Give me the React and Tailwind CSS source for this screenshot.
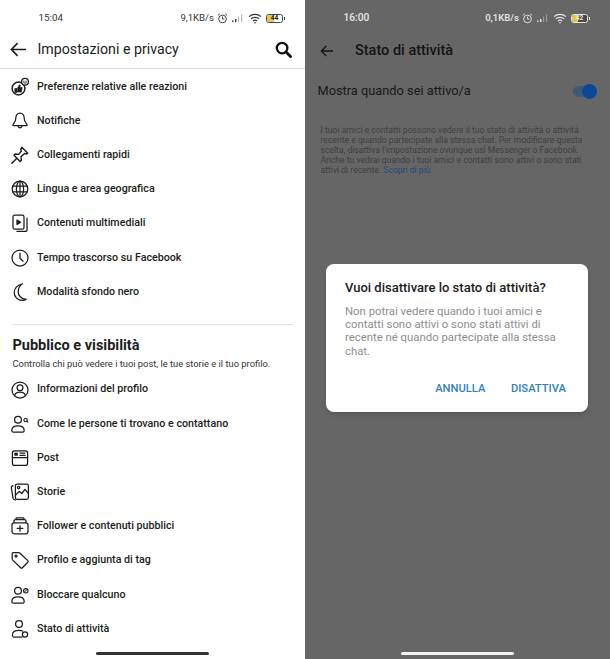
const S = ({ children, className = "" }) => (
  <svg viewBox="0 0 20 20" fill="none" stroke="#1c1c1c" strokeWidth="1.25" strokeLinecap="round" strokeLinejoin="round" className={"w-[20px] h-[20px] shrink-0 " + className}>{children}</svg>
);

const icons = {
  react: <S><circle cx="8.5" cy="11.5" r="6.4" strokeWidth="1.5" /><path d="M5 11.5h2v4H5zM7.5 11l2-3.2.8.5-.3 2.2h2.2l-.7 4.6H7.5z" fill="#1c1c1c" strokeWidth="0.6" /><circle cx="15" cy="4.8" r="3.4" fill="#fff" /><path d="M13.6 4.2h.6M15.8 4.2h.6M13.6 5.8q1.4 1 2.8 0" strokeWidth="0.9" /></S>,
  bell: <S><path d="M10 2c-2.6 0-4.2 2.4-4.2 5.2 0 3.4-2 5.2-3 6.8 0 .5.3.7.7.7h13c.4 0 .7-.2.7-.7-1-1.6-3-3.4-3-6.8C14.200 4.400 12.600 2 10 2z" /><path d="M8 14.800c.2 2.600 3.800 2.600 4 0" /></S>,
  pin: <S><path d="M11.800 2.200l6 6-1.600.8-1.600-.6-3.600 3.400.4 3.400-1.200 1.200-6.200-6.200 1.200-1.200 3.400.4L11.400 6l-.6-1.800z" strokeWidth="1.4" /><path d="M6.600 13.400L1.800 18.200" strokeWidth="1.4" /></S>,
  globe: <S><circle cx="10" cy="10" r="7.800" /><ellipse cx="10" cy="10" rx="3.600" ry="7.800" /><path d="M2.600 7.200h14.800M2.600 12.800h14.800M10 2.200v15.600" /></S>,
  media: <S><rect x="3" y="2.200" width="11" height="14" rx="1.800" /><path d="M17 5.200v11.200a2 2 0 0 1-2 2H7" /><path d="M7 7l3.600 2.200L7 11.400z" fill="#1c1c1c" /></S>,
  clock: <S><circle cx="10" cy="10" r="8" /><path d="M10 5v5.200l3 3" /></S>,
  moon: <S><path d="M12.600 1.800C7.600 2.600 4.200 6.200 4.200 10.600c0 4.200 3.600 7.800 8 7.800 1.600 0 3-.4 4-1-5.400-.4-8-4-8-7.600 0-3.400 1.600-6.400 4.400-8z" /></S>,
  profile: <S><circle cx="10" cy="10" r="8" /><circle cx="10" cy="7.800" r="2.900" /><path d="M4.600 15.600c.6-3 2.800-3.600 5.400-3.600s4.800.6 5.400 3.600" /></S>,
  find: <S><circle cx="8" cy="5.800" r="3.400" /><path d="M1.800 16.400c0-3.200 2.600-4.600 6.200-4.600s6.200 1.400 6.200 4.600c0 1-.6 1.600-1.600 1.600H3.400c-1 0-1.600-.6-1.600-1.600z" /><circle cx="15.600" cy="6" r="1.700" strokeWidth="1.100" /><path d="M16.800 7.200l1 1" strokeWidth="1.100" /></S>,
  post: <S><rect x="2.400" y="2.800" width="15.200" height="14.600" rx="2.200" /><path d="M2.400 9.600h15.200" /><path d="M5 5h2.400v2.400H5z" fill="#1c1c1c" strokeWidth="0.7" /><path d="M10 5h5M10 7.400h5" /></S>,
  story: <S><rect x="5.400" y="2" width="13" height="15.400" rx="1.800" /><path d="M3 3.600C1.600 4 1.200 5 1.400 6.200l1.600 10c.2 1 1 1.600 2.400 1.800" /><circle cx="8.600" cy="5.600" r="1.200" /><path d="M5.600 13l3.600-3.600 2.600 2.200 3-4.200 3.400 3.600" /></S>,
  follower: <S><rect x="2" y="6.800" width="16" height="11" rx="2.200" /><path d="M4 6.600V5c0-.9.7-1.400 1.400-1.400h9.200c.7 0 1.400.5 1.400 1.400v1.600M6 3.400V2.600c0-.5.4-.8.8-.8h6.400c.4 0 .8.3.8.8v.8" /><path d="M10 9.600v5.600M7.200 12.400h5.600" /></S>,
  tag: <S><path d="M3.200 2.600h5.400c.6 0 1 .2 1.400.6l7.800 7.400c.5.5.5 1.200 0 1.700l-5.400 5.500c-.5.5-1.200.5-1.700 0L3 10.400c-.5-.5-.8-1-.8-1.700V3.600c0-.6.4-1 1-1z" /><circle cx="6" cy="6" r="1" /></S>,
  block: <S><circle cx="8" cy="5.800" r="3.400" /><path d="M1.800 16.400c0-3.200 2.600-4.600 6.200-4.600s6.200 1.400 6.200 4.600c0 1-.6 1.600-1.600 1.600H3.400c-1 0-1.600-.6-1.600-1.600z" /><circle cx="15.800" cy="5.800" r="2.200" strokeWidth="1.100" /><path d="M14.400 7.200l2.800-2.800" strokeWidth="1" /></S>,
  status: <S><circle cx="9" cy="5" r="3.400" /><path d="M2.400 16.200c0-3.200 2.600-4.800 6.600-4.800 1.400 0 2.600.2 3.600.6M2.400 16.200c0 1 .6 1.800 1.600 1.800h8" /><circle cx="15" cy="15.400" r="2.600" /></S>,
};

const Row = ({ icon, label }) => (
  <div className="h-[34.2px] flex items-center pl-[10px]">
    <div className="w-[27px]">{icons[icon]}</div>
    <span className="text-[10.7px] font-medium text-[#1c1e21] whitespace-nowrap">{label}</span>
  </div>
);

const StatusIcons = ({ speed, level, dim }) => {
  const c = dim ? "#e6e6e6" : "#333";
  return (
    <div className={"flex items-center text-[9.6px] leading-[14px] " + (dim ? "text-[#e6e6e6] font-medium" : "text-[#333]")}>
      <span>{speed}</span>
      <svg viewBox="0 0 12 12" className="w-[11px] h-[11px] ml-[3px]" fill="none" stroke={c} strokeWidth="1"><circle cx="6" cy="6.500" r="4.200" /><path d="M6 4v2.600h2M1 2.600L3 1M11 2.600L9 1" /></svg>
      <svg viewBox="0 0 14 10" className="w-[14px] h-[10px] ml-[3px]"><path d="M1 7.600h1.400V9H1zM4 6h1.400v3H4z" fill={c} /><path d="M7 3.500h1.200V9H7zM10 1.200h1.200V9H10z" fill={dim ? "#999" : "#bbb"} /></svg>
      <svg viewBox="0 0 14 11" className="w-[14px] h-[11px] ml-[3px]" fill="none" stroke={c} strokeWidth="1.200"><path d="M1 3.600c3.400-3 8.600-3 12 0M3 5.800c2.200-2 5.800-2 8 0M5 8c1.100-1 2.900-1 4 0" /><circle cx="7" cy="9.700" r=".8" fill={c} stroke="none" /></svg>
      <div className={"ml-[4px] w-[17px] h-[9px] rounded-[2.5px] border flex overflow-hidden relative " + (dim ? "border-[#e6e6e6] bg-[#4a4a4a]" : "border-[#444] bg-white")}>
        <div className={"h-full bg-[#e9c74e] " + (level === "44" ? "w-[45%]" : "w-[40%]")} />
        <span className={"absolute inset-0 text-[6.5px] leading-[7px] text-center font-bold " + (dim ? "text-[#e6e6e6]" : "text-[#222]")}>{level}</span>
      </div>
      <div className={"w-[1px] h-[3px] ml-[1px] " + (dim ? "bg-[#e6e6e6]" : "bg-[#444]")} />
    </div>
  );
};

const Bar = ({ className }) => <div className={"absolute bottom-[4px] h-[3px] w-[113px] rounded-full " + className} />;

export default function App() {
  return (
    <div className="w-[610px] h-[659px] flex overflow-hidden" style={{ fontFamily: "Roboto, sans-serif" }}>
      <div className="w-[305px] h-full bg-white relative flex flex-col">
        <div className="h-[31px] pt-[11px] pl-[38.5px] pr-[20px] flex justify-between items-start">
          <span className="text-[9.8px] leading-[14px] text-[#333]">15:04</span>
          <StatusIcons speed="9,1KB/s" level="44" />
        </div>
        <div className="h-[38px] border-b border-[#d9d9d9] flex items-center pl-[10px] pr-[13px]">
          <svg viewBox="0 0 18 16" className="w-[17px] h-[15px]" fill="none" stroke="#1a1a1a" strokeWidth="1.700"><path d="M17 8H1.500M8 1.200L1.500 8 8 14.800" /></svg>
          <span className="ml-[10.5px] text-[14.2px] text-[#1c1e21] flex-1">Impostazioni e privacy</span>
          <svg viewBox="0 0 18 18" className="w-[17px] h-[17px]" fill="none" stroke="#111" strokeWidth="2.400" strokeLinecap="round"><circle cx="7.500" cy="7.500" r="5.600" /><path d="M12 12l4.400 4.400" strokeWidth="3" /></svg>
        </div>
        <div className="pt-[0.6px]">
          {[["react", "Preferenze relative alle reazioni"], ["bell", "Notifiche"], ["pin", "Collegamenti rapidi"], ["globe", "Lingua e area geografica"], ["media", "Contenuti multimediali"], ["clock", "Tempo trascorso su Facebook"], ["moon", "Modalità sfondo nero"]].map(([i, l]) => <Row key={l} icon={i} label={l} />)}
        </div>
        <div className="mx-[12px] mt-[15px] border-t border-[#e2e2e2]" />
        <div className="pl-[12.5px] mt-[12px] text-[14.5px] leading-[18px] font-bold text-[#1c1e21]">Pubblico e visibilità</div>
        <div className="pl-[12.5px] mt-[1px] text-[9.35px] leading-[15px] text-[#333]">Controlla chi può vedere i tuoi post, le tue storie e il tuo profilo.</div>
        <div className="mt-[1.5px]">
          {[["profile", "Informazioni del profilo"], ["find", "Come le persone ti trovano e contattano"], ["post", "Post"], ["story", "Storie"], ["follower", "Follower e contenuti pubblici"], ["tag", "Profilo e aggiunta di tag"], ["block", "Bloccare qualcuno"], ["status", "Stato di attività"]].map(([i, l]) => <Row key={l} icon={i} label={l} />)}
        </div>
        <Bar className="left-[96px] bg-[#333]" />
      </div>
      <div className="w-[305px] h-full bg-[#666666] relative flex flex-col">
        <div className="h-[34px] pt-[11px] pl-[38.5px] pr-[20px] flex justify-between items-start">
          <span className="text-[10.2px] leading-[14px] font-medium text-[#e6e6e6]">16:00</span>
          <StatusIcons speed="0,1KB/s" level="42" dim />
        </div>
        <div className="h-[32px] flex items-center pl-[15px] pt-[1px]">
          <svg viewBox="0 0 18 16" className="w-[14px] h-[12px]" fill="none" stroke="#111" strokeWidth="1.800"><path d="M17 8H1.500M8 1.200L1.500 8 8 14.800" /></svg>
          <span className="ml-[21px] text-[14.5px] font-medium text-[#141414]">Stato di attività</span>
        </div>
        <div className="mt-[10px] h-[30px] flex items-center justify-between pl-[12.5px] pr-[13px]">
          <span className="text-[12.8px] text-[#181818]">Mostra quando sei attivo/a</span>
          <div className="relative w-[24.5px] h-[11px] rounded-full bg-[#3f5a78]">
            <div className="absolute right-0 top-[-2px] w-[15px] h-[15px] rounded-full bg-[#0b4a93]" />
          </div>
        </div>
        <p className="mt-[19px] pl-[15.5px] pr-[15px] text-[8.6px] leading-[10.1px] text-[#3f3f3f]">
          I tuoi amici e contatti possono vedere il tuo stato di attività o attività recente e quando partecipate alla stessa chat. Per modificare questa scelta, disattiva l'impostazione ovunque usi Messenger o Facebook. Anche tu vedrai quando i tuoi amici e contatti sono attivi o sono stati attivi di recente. <span className="text-[#1f4a76]">Scopri di più.</span>
        </p>
        <div className="absolute left-[21px] top-[264px] w-[262px] h-[148px] bg-white rounded-[8px] shadow-md pl-[19px] pr-[22px] pt-[15px]">
          <div className="text-[13px] leading-[18px] font-medium text-[#1c1c1c] whitespace-nowrap">Vuoi disattivare lo stato di attività?</div>
          <p className="mt-[8px] text-[11.35px] leading-[13.2px] text-[#8e8e8e]">Non potrai vedere quando i tuoi amici e contatti sono attivi o sono stati attivi di recente né quando partecipate alla stessa chat.</p>
          <div className="absolute right-[22px] top-[118px] flex gap-[25.5px] text-[11.2px] leading-[14px] font-medium text-[#2f7fc4]">
            <span>ANNULLA</span>
            <span>DISATTIVA</span>
          </div>
        </div>
        <Bar className="left-[96px] bg-[#f2f2f2]" />
      </div>
    </div>
  );
}
